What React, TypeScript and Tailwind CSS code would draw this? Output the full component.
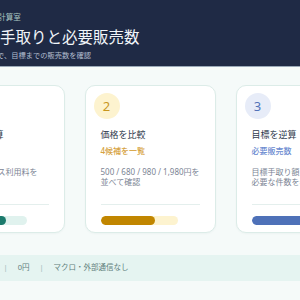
import React from "react";

type Card = {
  n: string;
  title: string;
  sub: string;
  lines: string[];
  circleBg: string;
  numColor: string;
  subColor: string;
  fill: string;
  track: string;
  pct: number;
};

const cards: Card[] = [
  {
    n: "1",
    title: "手取りを計算",
    sub: "実質の手取り",
    lines: ["価格とサービス利用料を", "引いて計算"],
    circleBg: "bg-[#dff2ee]",
    numColor: "text-[#1b7a6c]",
    subColor: "text-[#2a8a7a]",
    fill: "bg-[#1b7a6c]",
    track: "bg-[#e0f2ee]",
    pct: 73,
  },
  {
    n: "2",
    title: "価格を比較",
    sub: "4候補を一覧",
    lines: ["500 / 680 / 980 / 1,980円を", "並べて確認"],
    circleBg: "bg-[#fdf3cf]",
    numColor: "text-[#c8961e]",
    subColor: "text-[#d6a23e]",
    fill: "bg-[#c18600]",
    track: "bg-[#fdf3cf]",
    pct: 71,
  },
  {
    n: "3",
    title: "目標を逆算",
    sub: "必要販売数",
    lines: ["目標手取り額までに", "必要な件数を表示"],
    circleBg: "bg-[#e7ecf8]",
    numColor: "text-[#5272b8]",
    subColor: "text-[#6a8ad0]",
    fill: "bg-[#4e71b8]",
    track: "bg-[#e3eaf7]",
    pct: 88,
  },
];

export default function App() {
  return (
    <div className="min-h-[300px] w-full overflow-hidden bg-[#f5faf9] font-['Noto_Sans','Noto_Sans_CJK_JP',sans-serif]">
      <header className="flex w-full justify-center border-b border-[#9aa9b8] bg-[#1f2a45]">
        <div className="w-[433px] shrink-0 px-[20px] pt-[12px] pb-[6px]">
          <div className="whitespace-nowrap text-[7.5px] leading-[10px] text-[#a9c6c1]">デジタル販売計算室</div>
          <div className="mt-[5px] whitespace-nowrap text-[15.5px] leading-[20px] text-[#f1f5f9]">売上の手取りと必要販売数</div>
          <div className="mt-[3px] whitespace-nowrap text-[7.25px] leading-[10px] text-[#b3bfd0]">価格別の試算で、目標までの販売数を確認</div>
        </div>
      </header>

      <main className="flex w-full justify-center">
        <div className="w-[433px] shrink-0">
          <div className="mt-[18px] flex gap-[20px]">
            {cards.map((c) => (
              <div
                key={c.n}
                className="flex w-[131px] shrink-0 flex-col rounded-[10px] border border-[#dcece8] bg-white px-[15px] pt-[7px] pb-[7px] shadow-[0_1px_2px_rgba(20,80,70,0.04)]"
              >
                <div
                  className={`-ml-[7px] flex h-[26px] w-[26px] items-center justify-center rounded-full ${c.circleBg} ${c.numColor} text-[13px] leading-none`}
                >
                  {c.n}
                </div>
                <div className="mt-[10px] whitespace-nowrap text-[9px] leading-[12px] text-[#2f3a4d]">{c.title}</div>
                <div className={`mt-[4px] whitespace-nowrap text-[8px] font-medium leading-[12px] ${c.subColor}`}>{c.sub}</div>
                <div className="mt-[10px] whitespace-nowrap text-[8px] leading-[9.5px] text-[#7b8494]">
                  {c.lines.map((l) => (
                    <div key={l}>{l}</div>
                  ))}
                </div>
                <div className="mt-[18px] border-t border-[#e4efed] pt-[11px]">
                  <div className={`h-[9px] w-[78%] overflow-hidden rounded-full ${c.track}`}>
                    <div className={`h-full rounded-full ${c.fill}`} style={{ width: `${c.pct}%` }} />
                  </div>
                </div>
              </div>
            ))}
          </div>

          <div className="mt-[22px] flex h-[26px] items-center gap-[10px] bg-[#e5f4f1] px-[15px] text-[7.5px] leading-none text-[#5f7f7c]">
            <span>ログイン不要</span>
            <span className="text-[#9bb8b4]">|</span>
            <span>0円</span>
            <span className="text-[#9bb8b4]">|</span>
            <span>マクロ・外部通信なし</span>
          </div>
        </div>
      </main>
    </div>
  );
}
